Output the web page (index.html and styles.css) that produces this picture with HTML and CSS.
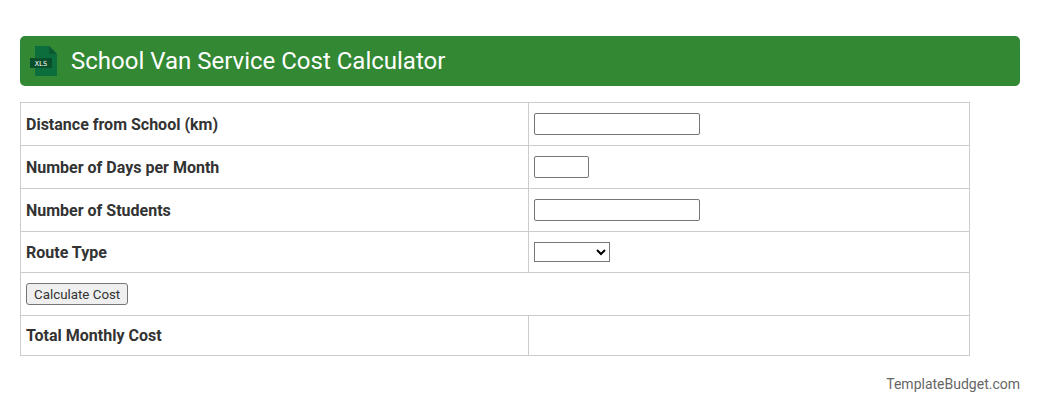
FILE: index.html
```html
<!DOCTYPE html>
<html lang="en">
  <head>
    <meta charset="UTF-8" />
    <meta name="viewport" content="width=device-width, initial-scale=1.0" />
    <title>School Van Service Cost Calculator</title>
    <link rel="stylesheet" href="styles.css">
  </head>
  <body>
    <div class="calc-header">
      <svg class="xls-icon" width="30" height="30" viewBox="0 0 30 30">
        <path d="M5 0H19L27 8V30H5Z" fill="#0b6e3c" />
        <path d="M19 0L27 8H19Z" fill="#0a5a32" />
        <rect x="0" y="12" width="22" height="10" fill="#0a4f2b" />
        <text x="11" y="20" class="xls-text" text-anchor="middle">XLS</text>
      </svg>
      <h1>School Van Service Cost Calculator</h1>
    </div>

    <table class="calc-table">
      <tr>
        <td class="label-cell">Distance from School (km)</td>
        <td class="value-cell"><input type="text" class="input-wide" /></td>
      </tr>
      <tr>
        <td class="label-cell">Number of Days per Month</td>
        <td class="value-cell"><input type="text" class="input-small" /></td>
      </tr>
      <tr>
        <td class="label-cell">Number of Students</td>
        <td class="value-cell"><input type="text" class="input-wide" /></td>
      </tr>
      <tr>
        <td class="label-cell">Route Type</td>
        <td class="value-cell">
          <select class="route-select">
            <option></option>
            <option>Urban Route</option>
          </select>
        </td>
      </tr>
      <tr>
        <td colspan="2" class="button-cell"><button type="button">Calculate Cost</button></td>
      </tr>
      <tr>
        <td class="label-cell">Total Monthly Cost</td>
        <td class="value-cell"></td>
      </tr>
    </table>

    <div class="credit"><a href="#">TemplateBudget.com</a></div>
  </body>
</html>
```

FILE: styles.css
```css
* {
  box-sizing: border-box;
}

body {
  margin: 0;
  padding: 36px 20px 0;
  background: #fff;
  color: #333;
  font-family: Roboto, "Liberation Sans", sans-serif;
  font-size: 16px;
}

/* Green title bar */
.calc-header {
  display: flex;
  align-items: center;
  gap: 11px;
  height: 50px;
  padding-left: 10px;
  background-color: #338833;
  border-radius: 5px;
}

.calc-header h1 {
  margin: 0;
  color: #fff;
  font-size: 24px;
  font-weight: 400;
}

.xls-icon {
  flex: none;
}

.xls-text {
  fill: #fff;
  font-family: "DejaVu Sans Mono", monospace;
  font-size: 7px;
}

/* Calculator table */
.calc-table {
  width: 950px;
  margin-top: 16px;
  border-collapse: collapse;
  table-layout: fixed;
}

.calc-table td {
  padding: 10px 5px;
  border: 1px solid #ccc;
}

.label-cell {
  width: 508px;
  font-weight: 700;
}

.calc-table input,
.calc-table select,
.calc-table button {
  display: block;
  margin: 0;
  font-family: Roboto, "Liberation Sans", sans-serif;
  font-size: 13.33px;
}

.calc-table input {
  height: 22px;
  padding: 1px 2px;
  background: #fff;
  border: 1px solid #767676;
  border-radius: 2px;
}

.input-wide {
  width: 166px;
}

.input-small {
  width: 55px;
}

.route-select {
  width: 76px;
  height: 20px;
  background: #fff;
}

.calc-table button {
  height: 22px;
  padding: 1px 7px;
  color: #333;
  background: #efefef;
  border: 1px solid #767676;
  border-radius: 3px;
}

.credit {
  margin-top: 20px;
  text-align: right;
  font-size: 14px;
}

.credit a {
  color: #666;
  text-decoration: none;
}
```
